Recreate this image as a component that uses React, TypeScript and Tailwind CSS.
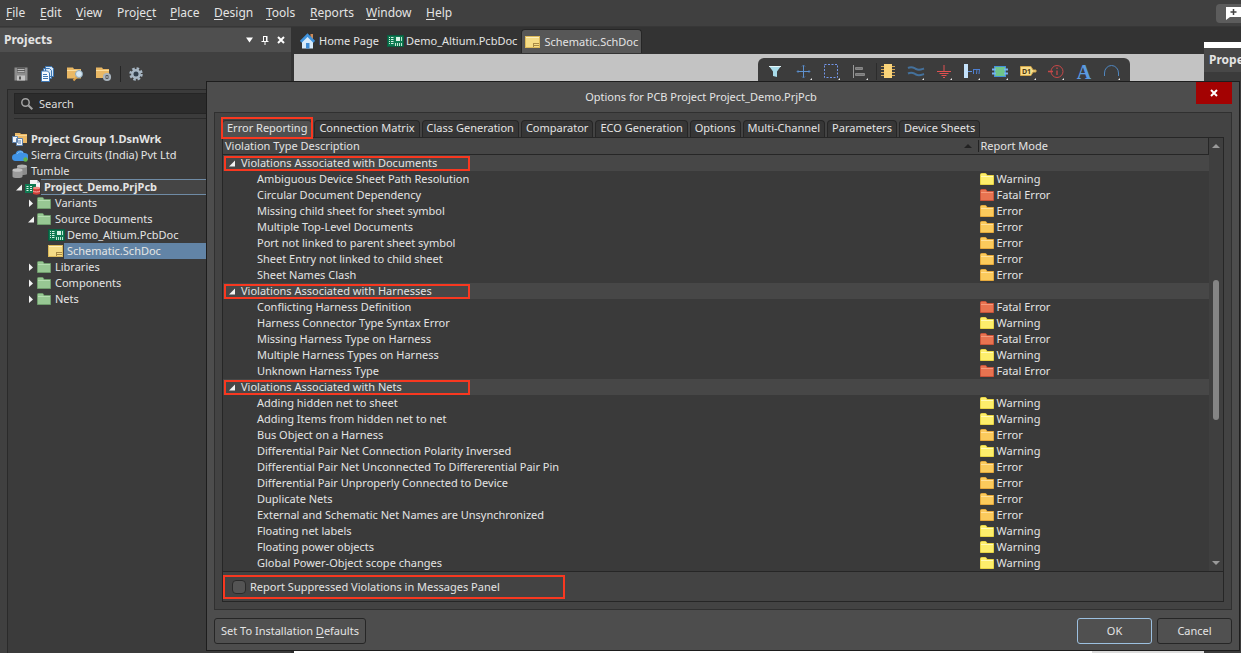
import React from "react";

type Mode = "Warning" | "Error" | "Fatal Error";

const groups: { title: string; rows: [string, Mode][] }[] = [
  {
    title: "Violations Associated with Documents",
    rows: [
      ["Ambiguous Device Sheet Path Resolution", "Warning"],
      ["Circular Document Dependency", "Fatal Error"],
      ["Missing child sheet for sheet symbol", "Error"],
      ["Multiple Top-Level Documents", "Error"],
      ["Port not linked to parent sheet symbol", "Error"],
      ["Sheet Entry not linked to child sheet", "Error"],
      ["Sheet Names Clash", "Error"],
    ],
  },
  {
    title: "Violations Associated with Harnesses",
    rows: [
      ["Conflicting Harness Definition", "Fatal Error"],
      ["Harness Connector Type Syntax Error", "Warning"],
      ["Missing Harness Type on Harness", "Fatal Error"],
      ["Multiple Harness Types on Harness", "Warning"],
      ["Unknown Harness Type", "Fatal Error"],
    ],
  },
  {
    title: "Violations Associated with Nets",
    rows: [
      ["Adding hidden net to sheet", "Warning"],
      ["Adding Items from hidden net to net", "Warning"],
      ["Bus Object on a Harness", "Error"],
      ["Differential Pair Net Connection Polarity Inversed", "Warning"],
      ["Differential Pair Net Unconnected To Differerential Pair Pin", "Error"],
      ["Differential Pair Unproperly Connected to Device", "Error"],
      ["Duplicate Nets", "Error"],
      ["External and Schematic Net Names are Unsynchronized", "Error"],
      ["Floating net labels", "Warning"],
      ["Floating power objects", "Warning"],
      ["Global Power-Object scope changes", "Warning"],
    ],
  },
];

const folderColors: Record<string, [string, string, string]> = {
  Warning: ["#e8d545", "#fdee6c", "#fffab8"],
  Error: ["#e5a93c", "#fbca5c", "#ffe09a"],
  "Fatal Error": ["#c9533a", "#e87350", "#f59a7c"],
  Green: ["#6f9c6c", "#97c793", "#b4dcb0"],
};

function Folder({ kind }: { kind: string }) {
  const [edge, fill, light] = folderColors[kind];
  return (
    <svg width="14" height="12" viewBox="0 0 14 12" className="shrink-0">
      <path d="M0.5 1.5 Q0.5 0.5 1.5 0.5 H5.5 Q6.500 0.5 7 2.5 H13.5 V11.5 H0.5Z" fill={fill} stroke={edge} />
      <path d="M1 3.5 H7 L8 3.5 H13" fill="none" stroke={light} />
    </svg>
  );
}

function PcbIcon() {
  return (
    <svg width="17" height="12" viewBox="0 0 17 12" className="shrink-0">
      <rect width="16" height="11" x="0.5" y="0.5" fill="#0f7a52" stroke="#0a5c3f" />
      <path d="M2 2.5h1M2 4.5h1M2 6.5h1M2 8.5h1M4 2.5h2.5M4 4.5h2.5M4 6.5h2.5M4 8.5h2.5" stroke="#d9f3e6" />
      <rect x="9" y="2" width="4" height="4" fill="#d9f3e6" />
      <path d="M14.5 2v4M8.500 8v3M10.500 8v3M12.500 8v3M14.500 8v3" stroke="#bfe6d4" />
    </svg>
  );
}

function SchIcon() {
  return (
    <svg width="15" height="12" viewBox="0 0 15 12" className="shrink-0">
      <rect x="0.5" y="0.5" width="14" height="11" fill="#f5dc86" stroke="#dcb95a" />
      <path d="M1 1.500H14" stroke="#fdf0bd" />
      <path d="M8.500 7.500H14M8.500 9.500H14M8.500 7V11" stroke="#a88a45" />
    </svg>
  );
}

function HomeIcon() {
  return (
    <svg width="15" height="16" viewBox="0 0 15 16" className="shrink-0">
      <rect x="10.500" y="1" width="2.500" height="5" fill="#c98a5a" />
      <path d="M2 8 L7.500 3 L13 8 V15.500 H2Z" fill="#d6eafb" />
      <path d="M0.800 8.800 L7.500 2 L14.200 8.800" fill="none" stroke="#3f93dd" strokeWidth="2.600" />
      <path d="M6 15.500V10h3.500v5.500Z" fill="#3d8bd4" />
    </svg>
  );
}

function GroupIcon() {
  return (
    <svg width="16" height="14" viewBox="0 0 16 14" className="shrink-0">
      <path d="M3 1h5l1 1h6v9H3Z" fill="#ebb866" />
      <path d="M3 3.500H15" stroke="#f8d795" />
      <path d="M0.500 4.500h5v6h-5zM4.500 6.500h6v7h-6z" fill="#f2f6fb" stroke="#5f83ad" />
      <path d="M6 9h3M6 11h3" stroke="#4b76ab" />
    </svg>
  );
}

function CloudIcon() {
  return (
    <svg width="16" height="13" viewBox="0 0 16 13" className="shrink-0">
      <path d="M3.500 12 A3.400 3.400 0 0 1 3.500 5 A4.500 4.500 0 0 1 12 4 A3.800 3.800 0 0 1 13 12Z" fill="#3f93e6" />
      <path d="M5 5 A4 4 0 0 1 11 3.500" stroke="#86c1f5" fill="none" />
      <circle cx="13.500" cy="10.500" r="2.200" fill="#63b34d" />
    </svg>
  );
}

function StorageIcon() {
  return (
    <svg width="16" height="15" viewBox="0 0 16 15" className="shrink-0">
      <path d="M5 2v8c0 1.500 10 1.500 10 0V2Z" fill="#8b8b8b" />
      <ellipse cx="10" cy="2.200" rx="5" ry="1.700" fill="#b3b3b3" />
      <path d="M0.500 6v6.500c0 2 10 2 10 0V6Z" fill="#9b9b9b" />
      <ellipse cx="5.500" cy="6" rx="5" ry="1.800" fill="#c2c2c2" />
    </svg>
  );
}

function ProjectIcon() {
  return (
    <svg width="16" height="15" viewBox="0 0 16 15" className="shrink-0">
      <path d="M5 0h7l3 3v9H5Z" fill="#f3f3f3" />
      <path d="M12 0l3 3h-3Z" fill="#b9c4cf" />
      <rect y="4" width="11" height="9" fill="#0f7a52" />
      <path d="M1.500 6.500h2M1.500 8.500h2M1.500 10.500h2M5 6.500h2M5 8.500h2M5 10.500h2" stroke="#d9f3e6" />
      <path d="M8 8v5.500c0 1.500 7 1.500 7 0V8Z" fill="#cf3c36" />
      <ellipse cx="11.500" cy="8" rx="3.500" ry="1.300" fill="#f08a80" />
      <path d="M8 11c1 1.300 6 1.300 7 0" stroke="#f7b5ae" fill="none" />
    </svg>
  );
}

function Expander({ open }: { open: boolean }) {
  return (
    <svg width="6" height="8" viewBox="0 0 6 8" className="shrink-0">
      <path d={open ? "M6 1.500V7.500H0Z" : "M1 0.500L5 4.500L1 8Z"} fill="#f2f2f2" />
    </svg>
  );
}

function CloseGlyph() {
  return (
    <svg width="8" height="8" viewBox="0 0 8 8">
      <path d="M1 1L7 7M7 1L1 7" stroke="#fff" strokeWidth="2" />
    </svg>
  );
}

const menus: [string, string, string, string][] = [
  ["", "F", "ile", "w-[34px]"],
  ["", "E", "dit", "w-[36px]"],
  ["", "V", "iew", "w-[41px]"],
  ["Proje", "c", "t", "w-[53px]"],
  ["", "P", "lace", "w-11"],
  ["", "D", "esign", "w-[52px]"],
  ["", "T", "ools", "w-11"],
  ["", "R", "eports", "w-14"],
  ["", "W", "indow", "w-[60px]"],
  ["", "H", "elp", "w-10"],
];

function MenuBar() {
  return (
    <header className="flex h-[27px] shrink-0 items-center border-b border-[#373737] bg-[#404040] pl-1.5">
      <nav className="flex flex-1 text-xs">
        {menus.map(([a, u, b, w]) => (
          <button key={a + u + b} className={`${w} text-left whitespace-nowrap`}>
            {a}
            <span className="underline underline-offset-2">{u}</span>
            {b}
          </button>
        ))}
      </nav>
      <button aria-label="Feedback" className="flex h-[19px] w-[25px] items-center justify-end rounded-l bg-[#5c5c5c]">
        <svg width="16" height="14" viewBox="0 0 16 14">
          <path d="M1 1H16V11H5L1 14Z" fill="#fff" />
          <path d="M8.500 3v6M5.500 6h6" stroke="#444" strokeWidth="1.500" />
        </svg>
      </button>
    </header>
  );
}

function PanelTools() {
  return (
    <div className="flex h-[37px] items-end gap-3 pb-[7px] pl-3.5 [&_svg]:block">
      <button aria-label="Save">
        <svg width="14" height="16" viewBox="0 0 14 16">
          <path d="M0.500 1.500h13v13h-13z" fill="#8d8d8d" />
          <path d="M3 1.500h8v5H3z" fill="#5c5c5c" />
          <path d="M3.500 3.500h7M3.500 5.500h7" stroke="#b9b9b9" />
          <path d="M3 9.500h8v5H3z" fill="#c4c4c4" />
          <path d="M5 10.500h2v3H5z" fill="#555" />
        </svg>
      </button>
      <button aria-label="Compile documents">
        <svg width="15" height="16" viewBox="0 0 15 16">
          <path d="M5.500 0.500h6l2 2v8h-8zM3.500 2.500h6l2 2v8h-8z" fill="#d5e7f8" stroke="#3e77b4" />
          <path d="M1.500 5h6l2 2v8.500h-8z" fill="#f5faff" stroke="#3e77b4" />
          <path d="M3 8.500h4M3 10.500h5M3 12.500h5" stroke="#3e77b4" />
        </svg>
      </button>
      <button aria-label="Explore project">
        <svg width="17" height="16" viewBox="0 0 17 16">
          <path d="M0 1.500h6l1 1.500h7v9.500H0Z" fill="#e9b865" />
          <path d="M0 4.500h14" stroke="#fbdc9c" />
          <path d="M10.500 10L6.500 14.500" stroke="#e0a44b" strokeWidth="2" />
          <circle cx="12" cy="8" r="3.500" fill="#d5e6f2" stroke="#8ba6b8" />
        </svg>
      </button>
      <button aria-label="Project settings">
        <svg width="16" height="16" viewBox="0 0 16 16">
          <path d="M0 1.500h6l1 1.500h6v9H0Z" fill="#e9b865" />
          <path d="M0 4.500h13" stroke="#fbdc9c" />
          <circle cx="11" cy="11" r="3" fill="#454545" stroke="#a9b4bd" strokeWidth="2.200" />
          <path d="M9.500 11h3" stroke="#dfe6eb" />
        </svg>
      </button>
      <span className="-mx-1 h-4 w-px bg-[#262626]" />
      <button aria-label="Options">
        <svg width="14" height="16" viewBox="0 0 14 16">
          <circle cx="7" cy="8" r="5.500" fill="none" stroke="#a8b7c4" strokeWidth="2.500" strokeDasharray="2.500 1.800" />
          <circle cx="7" cy="8" r="3.700" fill="#33404c" stroke="#a8b7c4" strokeWidth="2.400" />
        </svg>
      </button>
    </div>
  );
}

type Node = { label: string; icon: React.ReactNode; pad: string; exp?: boolean; style?: string };

const nodes: Node[] = [
  { label: "Project Group 1.DsnWrk", icon: <GroupIcon />, pad: "pl-1", style: "font-bold pl-[3px]" },
  { label: "Sierra Circuits (India) Pvt Ltd", icon: <CloudIcon />, pad: "pl-1", style: "pl-[3px]" },
  { label: "Tumble", icon: <StorageIcon />, pad: "pl-1", style: "pl-[3px]" },
  { label: "Project_Demo.PrjPcb", icon: <ProjectIcon />, pad: "pl-2", exp: true, style: "font-bold border-y border-[#6f8ba5] bg-[#454545] pl-[3px]" },
  { label: "Variants", icon: <Folder kind="Green" />, pad: "pl-5", exp: false, style: "pl-1" },
  { label: "Source Documents", icon: <Folder kind="Green" />, pad: "pl-5", exp: true, style: "pl-1" },
  { label: "Demo_Altium.PcbDoc", icon: <PcbIcon />, pad: "pl-10", style: "pl-0.5" },
  { label: "Schematic.SchDoc", icon: <SchIcon />, pad: "pl-10", style: "bg-[#6284a6] pl-[3px] ml-px" },
  { label: "Libraries", icon: <Folder kind="Green" />, pad: "pl-5", exp: false, style: "pl-1" },
  { label: "Components", icon: <Folder kind="Green" />, pad: "pl-5", exp: false, style: "pl-1" },
  { label: "Nets", icon: <Folder kind="Green" />, pad: "pl-5", exp: false, style: "pl-1" },
];

function ProjectsPanel() {
  return (
    <aside className="flex w-[291px] shrink-0 flex-col bg-[#404040]">
      <div className="mt-px flex h-6 shrink-0 items-center bg-[#4f4f4f] pr-1.5 pl-1">
        <h2 className="flex-1 text-xs font-bold">Projects</h2>
        <div className="flex items-center gap-2">
          <button aria-label="Panel menu">
            <svg width="7" height="6" viewBox="0 0 7 6"><path d="M0 0.500H7L3.500 5.500Z" fill="#fff" /></svg>
          </button>
          <button aria-label="Pin panel">
            <svg width="8" height="9" viewBox="0 0 8 9"><path d="M2 0.500H6.500M2.500 0V5M5.500 0V5M0.500 5.500H7.500M4 5V9" stroke="#fff" fill="none" /><path d="M5 1h1.500v4H5Z" fill="#fff" /></svg>
          </button>
          <button aria-label="Close panel"><CloseGlyph /></button>
        </div>
      </div>
      <PanelTools />
      <div className="ml-[7px] flex-1 border-t border-l border-[#2a2a2a] bg-[#3b3b3b]">
        <label className="mt-[3px] ml-1.5 flex h-[21px] items-center gap-1.5 border border-[#252525] bg-[#2c2c2c] pl-1.5">
          <svg width="12" height="12" viewBox="0 0 12 12">
            <circle cx="4.500" cy="4.500" r="3.700" fill="none" stroke="#a3a3a3" strokeWidth="1.500" />
            <path d="M7.500 7.500L11.300 11.300" stroke="#a3a3a3" strokeWidth="2" />
          </svg>
          <input type="text" aria-label="Search" placeholder="Search" className="w-40 bg-transparent text-[11px] outline-none placeholder:text-[#dcdcdc]" />
        </label>
        <ul className="mt-1 ml-1.5 border-t border-[#2a2a2a] pt-3">
          {nodes.map((n) => (
            <li key={n.label} className={`-ml-1.5 flex h-4 items-center ${n.pad}`}>
              {n.exp !== undefined && <span className="mr-[3px] flex"><Expander open={n.exp} /></span>}
              {n.icon}
              <span className={`flex h-4 flex-1 items-center whitespace-nowrap ${n.style ?? ""}`}>{n.label}</span>
            </li>
          ))}
        </ul>
      </div>
    </aside>
  );
}

const corner = <path d="M16 14V16H14Z" fill="#e8e8e8" />;

function DrawingBar() {
  return (
    <div className="mt-1 mr-[74px] flex h-7 items-center gap-3 rounded-t-md bg-[#3c3c3c] px-2.5 [&_button]:w-4 [&_svg]:block [&_svg]:overflow-visible">
      <button aria-label="Filter"><svg width="16" height="16" viewBox="0 0 16 16"><path d="M1 2H13L9 7.500V13L5 12V7.500Z" fill="#a9dcea" /><path d="M1 2.500H13" stroke="#e5f6fa" /></svg></button>
      <button aria-label="Move"><svg width="16" height="16" viewBox="0 0 16 16"><path d="M7.500 1V14M1 7.500H14" stroke="#5f92cf" /><path d="M6 2.500L7.500 1L9 2.500M6 12.500L7.500 14L9 12.500M2.500 6L1 7.500L2.500 9M12.500 6L14 7.500L12.500 9" stroke="#4d74a4" fill="none" />{corner}</svg></button>
      <button aria-label="Select"><svg width="16" height="16" viewBox="0 0 16 16"><rect x="0.500" y="0.500" width="13" height="13" fill="none" stroke="#7396e8" strokeDasharray="2 1.500" />{corner}</svg></button>
      <button aria-label="Align"><svg width="16" height="16" viewBox="0 0 16 16"><path d="M1.500 1V14" stroke="#999" /><path d="M3.500 3.500h7v2h-7zM3.500 9.500h9v2h-9z" fill="#777" stroke="#888" />{corner}</svg></button>
      <button aria-label="Place part"><svg width="16" height="16" viewBox="0 0 16 16"><path d="M-3.500 -1V16" stroke="#2c2c2c" /><path d="M1 2.500H15M1 5.500H15M1 8.500H15M1 11.500H15" stroke="#d3a759" /><rect x="4" y="0" width="8" height="14" fill="#fbd57a" /></svg></button>
      <button aria-label="Place wire"><svg width="16" height="16" viewBox="0 0 16 16"><path d="M0 4C4 2 5 3.500 8 5S13 5.500 16 4.500M0 9.500C4 7.500 5 9 8 10.500S13 11 16 10" stroke="#44719c" strokeWidth="2" fill="none" />{corner}</svg></button>
      <button aria-label="Place ground"><svg width="16" height="16" viewBox="0 0 16 16"><path d="M8 1V8M1 7.500H15M3.500 9.500H12.500M5.500 11.500H10.500M7 13.500H9" stroke="#e05050" />{corner}</svg></button>
      <button aria-label="Place harness"><svg width="17" height="16" viewBox="0 0 17 16"><rect x="0" y="0" width="4" height="14" fill="#c4e2fb" /><path d="M4 7.500H8" stroke="#5f92e0" /><path d="M9.500 10V5M12.500 10L13 5M15 10L15.500 5M9 5.500H16" stroke="#4d7fd0" />{corner}</svg></button>
      <button aria-label="Place sheet symbol"><svg width="16" height="16" viewBox="0 0 16 16"><rect x="2.500" y="2.500" width="11" height="10" fill="#6fc58a" stroke="#4590d8" /><path d="M0 5.500H4M0 9.500H4M12 5.500H16M12 9.500H16" stroke="#77b2ef" strokeWidth="2" />{corner}</svg></button>
      <button aria-label="Place designator"><svg width="16" height="16" viewBox="0 0 16 16"><path d="M0.500 2.500H11L13 6H16V8H13L11 11.500H0.500Z" fill="#f8dc8a" stroke="#d1a64a" /><text x="2" y="10" fontSize="7" fontWeight="700" fill="#4a3a14">D1</text>{corner}</svg></button>
      <button aria-label="Place directive"><svg width="16" height="16" viewBox="0 0 16 16"><circle cx="9" cy="7.500" r="6" fill="none" stroke="#c84848" /><path d="M0 7.500H5M9 6.500V11M9 3.500V5" stroke="#c84848" strokeWidth="1.300" />{corner}</svg></button>
      <button aria-label="Place text" className="font-['Liberation_Serif',serif] text-xl leading-4 font-bold text-[#5b9be0]">A</button>
      <button aria-label="Place arc"><svg width="16" height="16" viewBox="0 0 16 16"><path d="M0.500 12V9A7 7.500 0 0 1 14.500 9V12" fill="none" stroke="#4f86bf" />{corner}</svg></button>
    </div>
  );
}

const dialogTabs = ["Error Reporting", "Connection Matrix", "Class Generation", "Comparator", "ECO Generation", "Options", "Multi-Channel", "Parameters", "Device Sheets"];

function ViolationTable() {
  return (
    <div className="flex min-h-0 flex-1 border-b border-[#262626] bg-[#3a3a3a]">
      <div className="min-w-0 flex-1 overflow-hidden">
        <table className="w-full table-fixed border-collapse">
          <colgroup>
            <col />
            <col className="w-[231px]" />
          </colgroup>
          <thead>
            <tr className="h-4 border-r border-b border-[#262626] bg-[#464646]">
              <th className="p-0 pl-0.5 text-left font-normal">
                <div className="flex h-[15px] items-center justify-between pr-1.5">
                  Violation Type Description
                  <svg width="8" height="4" viewBox="0 0 8 4"><path d="M0 4L4 0L8 4Z" fill="#222" /></svg>
                </div>
              </th>
              <th className="p-0 text-left font-normal">
                <div className="flex h-3 items-center border-l border-[#222] pl-0.5">Report Mode</div>
              </th>
            </tr>
          </thead>
          {groups.map((g) => (
            <tbody key={g.title}>
              <tr className="h-4 bg-[#474747]">
                <th colSpan={2} scope="rowgroup" className="relative p-0 text-left font-normal">
                  <div className="flex h-4 items-center gap-1.5 pl-1.5"><Expander open />{g.title}</div>
                  <span className="pointer-events-none absolute top-px left-px h-[15px] w-[246px] border-2 border-[#f83820]" />
                </th>
              </tr>
              {g.rows.map(([name, mode]) => (
                <tr key={name} className="h-4">
                  <td className="p-0 pl-[34px]"><div className="h-4 leading-4 whitespace-nowrap">{name}</div></td>
                  <td className="p-0 pl-0.5"><div className="flex h-4 items-center gap-[3px] leading-4"><Folder kind={mode} />{mode}</div></td>
                </tr>
              ))}
            </tbody>
          ))}
        </table>
      </div>
      <div className="flex w-3.5 flex-col items-center bg-[#3f3f3f] py-1.5">
        <svg width="8" height="4" viewBox="0 0 8 4"><path d="M0 4L4 0L8 4Z" fill="#999" /></svg>
        <div className="flex-[132]" />
        <div className="w-1.5 flex-[139] rounded-full bg-[#858585]" />
        <div className="flex-[141]" />
        <svg width="8" height="4" viewBox="0 0 8 4"><path d="M0 0H8L4 4Z" fill="#999" /></svg>
      </div>
    </div>
  );
}

function OptionsDialog() {
  return (
    <section role="dialog" aria-labelledby="dialog-title" className="absolute top-[81px] right-px bottom-0.5 left-[206px] flex flex-col border border-[#1d1d1d] bg-[#4d4d4d] px-[7px] pb-1.5">
      <div className="flex h-[30px] shrink-0 items-start">
        <h1 id="dialog-title" className="flex-1 pt-[7px] pr-2 text-center text-[11px]">Options for PCB Project Project_Demo.PrjPcb</h1>
        <button aria-label="Close" className="flex h-[22px] w-9 items-center justify-center bg-[#a30202]"><CloseGlyph /></button>
      </div>
      <div className="flex min-h-0 flex-1 flex-col border border-[#303030] bg-[#434343] p-[7px]">
        <div role="tablist" className="flex h-[17px] shrink-0 gap-0.5">
          {dialogTabs.map((t, i) => (
            <button
              key={t}
              role="tab"
              aria-selected={i === 0}
              className={`relative rounded-t-sm border-x border-t px-1 pb-0.5 leading-[14px] whitespace-nowrap ${i === 0 ? "border-[#333] bg-[#505050]" : "border-[#262626] bg-[#363636]"}`}
            >
              {t}
              {i === 0 && <span className="pointer-events-none absolute -inset-x-0.5 -top-1 -bottom-0.5 z-10 border-2 border-[#f83820]" />}
            </button>
          ))}
        </div>
        <div className="flex min-h-0 flex-1 flex-col border border-[#262626]">
          <ViolationTable />
          <div className="flex h-[29px] shrink-0 items-center">
            <label className="flex h-6 w-[342px] items-center gap-1 border-2 border-[#f83820] pl-[7px]">
              <input type="checkbox" className="size-3.5 appearance-none rounded-sm border border-[#2a2a2a] bg-[#545454]" />
              Report Suppressed Violations in Messages Panel
            </label>
          </div>
        </div>
      </div>
      <div className="mt-2 flex shrink-0 gap-[5px] [&_button]:h-[26px] [&_button]:rounded-[3px] [&_button]:border [&_button]:bg-[#505050]">
        <button className="border-[#262626] px-1.5">Set To Installation <span className="underline underline-offset-2">D</span>efaults</button>
        <span className="flex-1" />
        <button className="w-[75px] border-[#9cc0e0]">OK</button>
        <button className="w-[75px] border-[#262626]">Cancel</button>
      </div>
    </section>
  );
}

export default function App() {
  return (
    <div className="relative flex h-screen flex-col overflow-hidden bg-[#333333] font-['Noto_Sans',sans-serif] text-[11px] leading-4 text-[#e4e4e4]">
      <MenuBar />
      <div className="flex min-h-0 flex-1">
        <ProjectsPanel />
        <main className="ml-[3px] flex min-w-0 flex-1 flex-col">
          <div role="tablist" className="flex h-[27px] shrink-0 items-end pb-px [&_button]:h-6">
            <button role="tab" className="flex items-center gap-1 pr-1 pl-1.5"><HomeIcon />Home Page</button>
            <button role="tab" className="flex items-center gap-0.5 px-1"><PcbIcon />Demo_Altium.PcbDoc</button>
            <button role="tab" aria-selected="true" className="flex items-center gap-1 rounded-t border border-b-0 border-[#262626] bg-[#575757] px-[3px]"><SchIcon />Schematic.SchDoc</button>
          </div>
          <div className="flex min-h-0 flex-1">
            <div className="flex min-w-0 flex-1 flex-col items-end justify-between bg-[#c3c3c3]">
              <DrawingBar />
              <div className="flex h-0.5 w-full">
                <span className="flex-1 bg-white" />
                <span className="w-28 bg-[#dcdcdc]" />
              </div>
            </div>
            <aside className="-mt-3 w-[37px] overflow-hidden border-t-[6px] border-white bg-[#3b3b3b]">
              <h2 className="bg-[#484848] py-1 pl-[5px] text-xs font-bold">Properties</h2>
            </aside>
          </div>
        </main>
      </div>
      <OptionsDialog />
    </div>
  );
}
